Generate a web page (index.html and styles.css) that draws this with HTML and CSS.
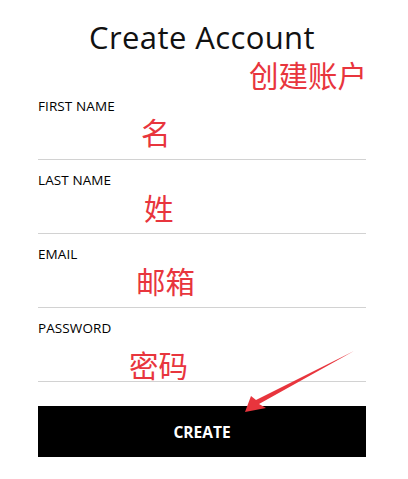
FILE: index.html
```html
<!DOCTYPE html>
<html lang="en">
<head>
<meta charset="utf-8">
<title>Create Account</title>
<link rel="stylesheet" href="styles.css">
</head>
<body>
<div class="page">
  <form class="form">
    <h1 class="title">Create Account</h1>
    <div class="field">
      <label class="label">FIRST NAME</label>
      <input class="input" type="text">
    </div>
    <div class="field">
      <label class="label">LAST NAME</label>
      <input class="input" type="text">
    </div>
    <div class="field">
      <label class="label">EMAIL</label>
      <input class="input" type="email">
    </div>
    <div class="field">
      <label class="label">PASSWORD</label>
      <input class="input" type="password">
    </div>
    <button class="btn" type="button">CREATE</button>
  </form>

  <span class="note note-title">创建账户</span>
  <span class="note note-first">名</span>
  <span class="note note-last">姓</span>
  <span class="note note-email">邮箱</span>
  <span class="note note-pass">密码</span>
  <svg class="arrow" width="408" height="479" viewBox="0 0 408 479">
    <polygon points="245,412 251,396 256,400 354,351 259,404 266,408" fill="#e8353d"/>
  </svg>
</div>
</body>
</html>
```
FILE: styles.css
```css
html, body {
  margin: 0;
  padding: 0;
  background: #fff;
}
.page {
  position: relative;
  width: 408px;
  height: 479px;
  font-family: "Open Sans", "Liberation Sans", sans-serif;
  color: #111;
}
.form {
  width: 328px;
  margin: 0 0 0 38px;
  padding-top: 17px;
  display: flex;
  flex-direction: column;
}
.title {
  margin: 0 0 29px;
  font-size: 31px;
  font-weight: 400;
  line-height: 40px;
  letter-spacing: 0.4px;
  text-align: center;
  color: #111;
}
.field {
  display: flex;
  flex-direction: column;
  padding-top: 11px;
  border-bottom: 1px solid #d2d2d2;
}
.label {
  font-size: 13.5px;
  line-height: 18px;
  color: #000;
  letter-spacing: 0.1px;
}
.input {
  height: 44px;
  border: 0;
  padding: 0;
  margin: 0;
  background: transparent;
  outline: none;
}
.btn {
  margin-top: 24px;
  height: 51px;
  border: 0;
  background: #000;
  color: #fff;
  font-family: "Open Sans", "Liberation Sans", sans-serif;
  font-weight: 700;
  font-size: 15.5px;
  letter-spacing: 0;
  padding: 0;
}
.note {
  position: absolute;
  font-family: "Noto Sans CJK SC", "Noto Sans", sans-serif;
  font-size: 29.5px;
  line-height: 30px;
  color: #e8353d;
  white-space: nowrap;
}
.note-title { left: 249px; top: 59px; }
.note-first { left: 141px; top: 116px; }
.note-last { left: 144px; top: 192px; }
.note-email { left: 136px; top: 265px; }
.note-pass { left: 129px; top: 349px; }
.arrow {
  position: absolute;
  left: 0;
  top: 0;
  pointer-events: none;
}
```
